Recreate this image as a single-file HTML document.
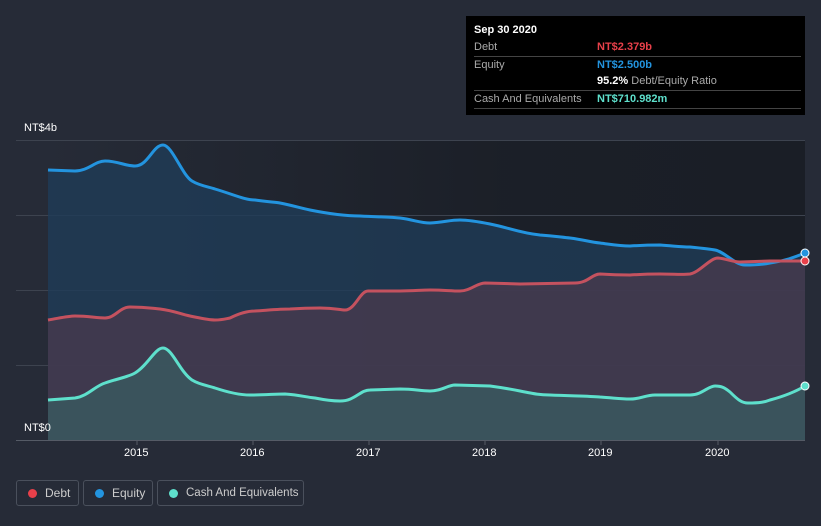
<!DOCTYPE html>
<html><head><style>
html,body{margin:0;width:821px;height:526px;overflow:hidden}
body{background:#262b37;font-family:"Liberation Sans",sans-serif;position:relative}
.lbl{position:absolute;color:#fff;font-size:11px}
.tt{position:absolute;left:466px;top:16px;width:339px;height:99px;background:#000;font-size:11px;color:#aaa}
.tt .r{position:absolute;left:8px;right:4px;border-bottom:1px solid #444;height:17px;line-height:17px}
.leg{position:absolute;top:480px;height:26px;border:1px solid #4a505c;border-radius:3px;color:#ccc;font-size:12px;line-height:24px;box-sizing:border-box;white-space:nowrap;padding-left:28px}
.leg i{position:absolute;left:11px;top:8px;width:9px;height:9px;border-radius:50%}
</style></head><body>
<svg width="821" height="526" style="position:absolute;left:0;top:0">
<defs>
<linearGradient id="ov" x1="0" x2="1" y1="0" y2="0"><stop offset="0" stop-color="#1a1e26" stop-opacity="0"/><stop offset="0.6" stop-color="#1a1e26" stop-opacity="0.9"/><stop offset="1" stop-color="#1a1e26" stop-opacity="1"/></linearGradient>
</defs>
<rect x="48" y="140" width="757" height="300" fill="url(#ov)"/>
<g stroke="#3d434f" stroke-width="1">
<line x1="16" x2="805" y1="140.5" y2="140.5"/><line x1="16" x2="805" y1="215.5" y2="215.5"/><line x1="16" x2="805" y1="290.5" y2="290.5"/><line x1="16" x2="805" y1="365.5" y2="365.5"/><line x1="16" x2="805" y1="440.5" y2="440.5" stroke="#555b66"/>
</g>
<path d="M48,170 L75,171 C88,171 95,161 105,161 C118,161 125,166 135,166 C148,166 153,145 163,145 C172,145 182,175 192,181 C200,186 210,187 215,189 C235,195 245,200 255,200 C268,202 275,202 280,203 C295,206 300,208 310,210 C330,214 345,216 360,216 C380,217 390,217 400,218 C415,220 420,223 430,223 C445,222 450,220 460,220 C470,220 480,222 490,224 C510,228 520,233 540,235 C555,236 560,237 570,238 C585,240 590,242 600,243 C615,245 620,246 630,246 C645,245 650,245 660,245 C675,246 680,247 690,247 C700,248 710,249 715,250 C725,252 735,265 745,265 C755,265 765,264 770,263 C785,261 795,257 805,253 L805,440 L48,440Z" fill="#1f3c57" fill-opacity="0.8"/>
<path d="M48,320 C60,318 68,316 75,316 C90,316 95,318 105,318 C115,318 120,307 130,307 C145,307 150,308 160,309 C175,311 180,314 190,316 C200,318 208,320 215,320 C222,320 225,319 230,318 C240,313 248,311 255,311 C270,310 280,309 290,309 C305,308 310,308 320,308 C335,308 340,310 345,310 C355,310 360,291 368,291 L400,291 C415,291 420,290 430,290 C445,290 450,291 460,291 C470,291 477,283 485,283 L520,284 L575,283 C588,283 592,274 600,274 C615,275 620,275 630,275 C645,274 650,274 660,274 C675,274 682,275 690,274 C700,272 710,258 718,258 C728,259 732,262 740,262 L770,261 L805,261 L805,440 L48,440Z" fill="#453a4e" fill-opacity="0.85"/>
<path d="M48,400 L75,398 C88,396 95,386 105,383 C120,378 128,377 135,373 C148,365 155,348 163,348 C172,348 180,372 192,380 C200,385 210,386 215,388 C230,393 240,395 250,395 C265,395 275,394 285,394 C300,395 305,397 315,398 C325,400 332,401 340,401 C355,401 360,390 370,390 L400,389 C415,389 420,391 430,391 C442,391 448,385 455,385 L490,386 C505,388 510,389 520,391 C535,394 540,395 550,395 C575,396 590,396 600,397 C615,398 620,399 630,399 C642,399 645,395 655,395 L690,395 C702,395 708,386 715,386 C722,386 725,388 730,392 C738,400 742,403 748,403 C760,403 765,402 770,400 C785,396 795,392 805,386 L805,440 L48,440Z" fill="#3a5a60" fill-opacity="0.8"/>
<path d="M48,170 L75,171 C88,171 95,161 105,161 C118,161 125,166 135,166 C148,166 153,145 163,145 C172,145 182,175 192,181 C200,186 210,187 215,189 C235,195 245,200 255,200 C268,202 275,202 280,203 C295,206 300,208 310,210 C330,214 345,216 360,216 C380,217 390,217 400,218 C415,220 420,223 430,223 C445,222 450,220 460,220 C470,220 480,222 490,224 C510,228 520,233 540,235 C555,236 560,237 570,238 C585,240 590,242 600,243 C615,245 620,246 630,246 C645,245 650,245 660,245 C675,246 680,247 690,247 C700,248 710,249 715,250 C725,252 735,265 745,265 C755,265 765,264 770,263 C785,261 795,257 805,253" fill="none" stroke="#2394df" stroke-width="3"/>
<path d="M48,320 C60,318 68,316 75,316 C90,316 95,318 105,318 C115,318 120,307 130,307 C145,307 150,308 160,309 C175,311 180,314 190,316 C200,318 208,320 215,320 C222,320 225,319 230,318 C240,313 248,311 255,311 C270,310 280,309 290,309 C305,308 310,308 320,308 C335,308 340,310 345,310 C355,310 360,291 368,291 L400,291 C415,291 420,290 430,290 C445,290 450,291 460,291 C470,291 477,283 485,283 L520,284 L575,283 C588,283 592,274 600,274 C615,275 620,275 630,275 C645,274 650,274 660,274 C675,274 682,275 690,274 C700,272 710,258 718,258 C728,259 732,262 740,262 L770,261 L805,261" fill="none" stroke="#c4525f" stroke-width="3"/>
<path d="M48,400 L75,398 C88,396 95,386 105,383 C120,378 128,377 135,373 C148,365 155,348 163,348 C172,348 180,372 192,380 C200,385 210,386 215,388 C230,393 240,395 250,395 C265,395 275,394 285,394 C300,395 305,397 315,398 C325,400 332,401 340,401 C355,401 360,390 370,390 L400,389 C415,389 420,391 430,391 C442,391 448,385 455,385 L490,386 C505,388 510,389 520,391 C535,394 540,395 550,395 C575,396 590,396 600,397 C615,398 620,399 630,399 C642,399 645,395 655,395 L690,395 C702,395 708,386 715,386 C722,386 725,388 730,392 C738,400 742,403 748,403 C760,403 765,402 770,400 C785,396 795,392 805,386" fill="none" stroke="#5ee0cc" stroke-width="3"/>
<rect x="805" y="130" width="16" height="320" fill="#262b37"/>
<circle cx="805" cy="261" r="4" fill="#e8404a" stroke="#fff" stroke-width="1"/>
<circle cx="805" cy="253" r="4" fill="#2394df" stroke="#fff" stroke-width="1"/>
<circle cx="805" cy="386" r="4" fill="#5ee0cc" stroke="#fff" stroke-width="1"/>
<g stroke="#555b66"><line x1="137" x2="137" y1="440" y2="445"/><line x1="253" x2="253" y1="440" y2="445"/><line x1="369" x2="369" y1="440" y2="445"/><line x1="485" x2="485" y1="440" y2="445"/><line x1="601" x2="601" y1="440" y2="445"/><line x1="718" x2="718" y1="440" y2="445"/></g>
</svg>
<div class="lbl" style="left:24px;top:122px">NT$4b</div>
<div class="lbl" style="left:24px;top:422px">NT$0</div>
<div class="lbl" style="left:124px;top:447px">2015</div>
<div class="lbl" style="left:240px;top:447px">2016</div>
<div class="lbl" style="left:356px;top:447px">2017</div>
<div class="lbl" style="left:472px;top:447px">2018</div>
<div class="lbl" style="left:588px;top:447px">2019</div>
<div class="lbl" style="left:705px;top:447px">2020</div>
<div class="tt">
<div style="position:absolute;left:8px;top:8px;color:#fff;font-weight:bold">Sep 30 2020</div>
<div class="r" style="top:23px">Debt<span style="position:absolute;left:123px;color:#e8404a;font-weight:bold">NT$2.379b</span></div>
<div class="r" style="top:41px;border:none">Equity<span style="position:absolute;left:123px;color:#2394df;font-weight:bold">NT$2.500b</span></div>
<div class="r" style="top:57px"><span style="position:absolute;left:123px"><b style="color:#fff">95.2%</b> Debt/Equity Ratio</span></div>
<div class="r" style="top:75px">Cash And Equivalents<span style="position:absolute;left:123px;color:#5ee0cc;font-weight:bold">NT$710.982m</span></div>
</div>
<div class="leg" style="left:16px;width:63px"><i style="background:#e8404a"></i>Debt</div>
<div class="leg" style="left:83px;width:70px"><i style="background:#2394df"></i>Equity</div>
<div class="leg" style="left:157px;width:147px;font-size:11.5px"><i style="background:#5ee0cc"></i>Cash And Equivalents</div>
</body></html>
